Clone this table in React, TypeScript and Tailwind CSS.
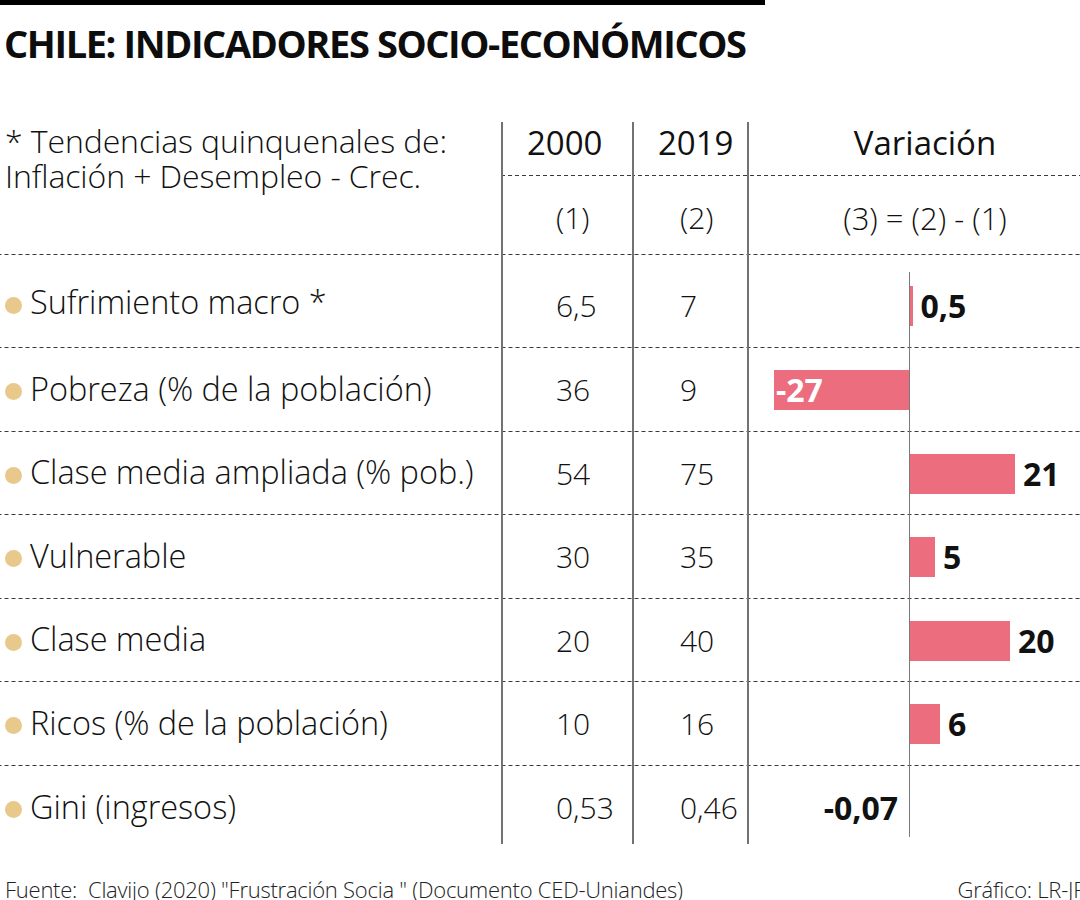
import React from "react";

type Row = { label: string; a: string; b: string; v: number; vl: string };

const rows: Row[] = [
  { label: "Sufrimiento macro *", a: "6,5", b: "7", v: 0.5, vl: "0,5" },
  { label: "Pobreza (% de la población)", a: "36", b: "9", v: -27, vl: "-27" },
  { label: "Clase media ampliada (% pob.)", a: "54", b: "75", v: 21, vl: "21" },
  { label: "Vulnerable", a: "30", b: "35", v: 5, vl: "5" },
  { label: "Clase media", a: "20", b: "40", v: 20, vl: "20" },
  { label: "Ricos (% de la población)", a: "10", b: "16", v: 6, vl: "6" },
  { label: "Gini (ingresos)", a: "0,53", b: "0,46", v: -0.07, vl: "-0,07" },
];

const heights = [93, 84, 83, 84, 83, 84, 78];
const SCALE = 5;

const dash =
  "bg-[linear-gradient(to_right,#3a3a3a_4px,transparent_4px)] bg-[length:7px_1px] bg-repeat-x bg-bottom";

function DataRow({ r, i }: { r: Row; i: number }) {
  const h = heights[i];
  const first = i === 0;
  const last = i === rows.length - 1;
  const w = Math.abs(r.v) * SCALE;
  return (
    <div
      className={`grid grid-cols-[501px_131px_115px_333px] ${last ? "" : dash}`}
      style={{ height: h }}
    >
      <div className={`flex items-center ${first ? "pt-[4px]" : ""}`}>
        <div className={`flex items-center ${last ? "mt-[3px]" : "-mt-[3px]"}`}>
          <span className="ml-[5px] mt-[6px] block h-[17px] w-[17px] rounded-full bg-[#e8c98b]" />
          <span className="ml-[8px] text-[32.5px] font-light leading-[40px] tracking-[-0.05px] text-[#111]">
            {r.label}
          </span>
        </div>
      </div>
      <div className={`flex items-center border-l-2 border-[#727272] pl-[53px] ${first ? "pt-[9px]" : ""}`}>
        <span className={`text-[30px] font-light leading-[40px] text-[#111] ${last ? "mt-[6px]" : ""}`}>{r.a}</span>
      </div>
      <div className={`flex items-center border-l-2 border-[#727272] pl-[46px] ${first ? "pt-[9px]" : ""}`}>
        <span className={`text-[30px] font-light leading-[40px] text-[#111] ${last ? "mt-[6px]" : ""}`}>{r.b}</span>
      </div>
      <div className="flex border-l-2 border-[#727272]">
        <div
          className={`flex w-[160px] items-center justify-end ${first ? "pt-[9px]" : ""} ${last ? "pt-[6px]" : ""}`}
        >
          {r.v < 0 && w > 40 ? (
            <div className="flex h-[40px] items-center bg-[#ec6d7e] pl-[2px]" style={{ width: w }}>
              <span className="text-[32px] font-bold leading-[40px] text-white">{r.vl}</span>
            </div>
          ) : r.v < 0 ? (
            <span className="mr-[11px] text-[32px] font-bold leading-[40px] text-[#111]">{r.vl}</span>
          ) : null}
        </div>
        <div className={`w-px bg-[#7a7a7a] ${first ? "mt-[17px]" : ""} ${last ? "mb-[7px]" : ""}`} />
        <div className={`flex flex-1 items-center ${first ? "pt-[9px]" : ""}`}>
          {r.v > 0 && (
            <>
              <div className="h-[40px] bg-[#ec6d7e]" style={{ width: Math.max(w, 2.5) }} />
              <span className="ml-[8px] text-[32px] font-bold leading-[40px] text-[#111]">{r.vl}</span>
            </>
          )}
        </div>
      </div>
    </div>
  );
}

export default function App() {
  return (
    <div className="relative flex h-[900px] w-[1080px] flex-col overflow-hidden bg-white font-['Open_Sans',sans-serif] text-[#111]">
      <div className="h-[5px] w-[765px] shrink-0 bg-black" />
      <h1 className="mt-[19px] h-[38px] shrink-0 whitespace-nowrap pl-[4px] text-[38px] font-bold leading-[38px] tracking-[-1.4px] text-[#0d0d0d]">
        CHILE: INDICADORES SOCIO-ECONÓMICOS
      </h1>

      <div className="mt-[60px] flex shrink-0 flex-col">
        {/* header */}
        <div className={`grid h-[133px] grid-cols-[501px_131px_115px_333px] ${dash}`}>
          <div className="pl-[5px] pt-[1px] text-[32px] font-light leading-[35px] tracking-[-0.1px] text-[#111]">
            <div className="whitespace-nowrap">* Tendencias quinquenales de:</div>
            <div className="whitespace-nowrap">Inflación + Desempleo - Crec.</div>
          </div>
          <div className="flex flex-col border-l-2 border-[#727272]">
            <div className={`h-[54px] pl-[24px] pt-[4px] ${dash}`}>
              <span className="text-[33px] leading-[33px]">2000</span>
            </div>
            <div className="pl-[53px] pt-[27px] text-[30px] font-light leading-[30px]">(1)</div>
          </div>
          <div className="flex flex-col border-l-2 border-[#727272]">
            <div className={`h-[54px] pl-[24px] pt-[4px] ${dash}`}>
              <span className="text-[33px] leading-[33px]">2019</span>
            </div>
            <div className="pl-[46px] pt-[27px] text-[30px] font-light leading-[30px]">(2)</div>
          </div>
          <div className="flex flex-col border-l-2 border-[#727272]">
            <div className={`h-[54px] pl-[21px] pt-[4px] text-center ${dash}`}>
              <span className="text-[33px] leading-[33px]">Variación</span>
            </div>
            <div className="pl-[21px] pt-[27px] text-center text-[31px] font-light leading-[30px]">
              (3) = (2) - (1)
            </div>
          </div>
        </div>

        {rows.map((r, i) => (
          <DataRow key={r.label} r={r} i={i} />
        ))}
      </div>

      <div className="mt-[31px] flex shrink-0 items-end pl-[5px] text-[22px] font-light leading-[28px] tracking-[-0.25px] text-[#222]">
        <span className="whitespace-nowrap">Fuente:&nbsp; Clavijo (2020) "Frustración Socia " (Documento CED-Uniandes)</span>
        <span className="ml-auto -mr-[4px] whitespace-nowrap">Gráfico: LR-JF</span>
      </div>
    </div>
  );
}
